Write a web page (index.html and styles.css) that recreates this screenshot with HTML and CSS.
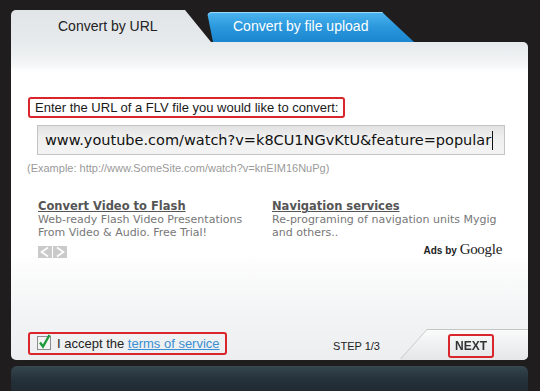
FILE: index.html
```html
<!DOCTYPE html>
<html lang="en">
<head>
    <meta charset="UTF-8">
    <meta name="viewport" content="width=device-width, initial-scale=1.0">
    <title>FLV Converter</title>
    <link rel="stylesheet" href="styles.css">
</head>
<body>
    <div class="app">
        <div class="tabs">
            <div class="tab tab-active">Convert by URL</div>
            <div class="tab tab-upload">Convert by file upload</div>
        </div>
        <div class="panel">
            <div class="prompt">Enter the URL of a FLV file you would like to convert:</div>
            <div class="field">
                <span class="field-text">www.youtube.com/watch?v=k8CU1NGvKtU&amp;feature=popular</span><span class="caret"></span>
            </div>
            <div class="example">(Example: http://www.SomeSite.com/watch?v=knEIM16NuPg)</div>

            <div class="ads">
                <div class="ad">
                    <a class="ad-title" href="#">Convert Video to Flash</a>
                    <p>Web-ready Flash Video Presentations<br>From Video &amp; Audio. Free Trial!</p>
                </div>
                <div class="ad">
                    <a class="ad-title" href="#">Navigation services</a>
                    <p>Re-programing of navigation units Mygig<br>and others..</p>
                </div>
            </div>
            <div class="ads-foot">
                <div class="arrows">
                    <span class="arrow"><svg width="14" height="12" viewBox="0 0 14 12"><path d="M10 1.5 L3.5 6 L10 10.5" fill="none" stroke="#fff" stroke-width="1.6"/></svg></span>
                    <span class="arrow"><svg width="14" height="12" viewBox="0 0 14 12"><path d="M4 1.5 L10.5 6 L4 10.5" fill="none" stroke="#fff" stroke-width="1.6"/></svg></span>
                </div>
                <div class="ads-by">Ads by <span class="google">Google</span></div>
            </div>

            <div class="footer">
                <label class="accept">
                    <svg class="check" width="15" height="16" viewBox="0 0 15 16">
                        <rect x="0.5" y="2.5" width="13" height="13" fill="#f4f4f4" stroke="#8c8c8c"/>
                        <path d="M3 8.5 L6 12.5 L12.5 1" fill="none" stroke="#1f9a3c" stroke-width="2.4"/>
                    </svg>
                    <span>I accept the <a href="#" class="terms">terms of service</a></span>
                </label>
                <div class="step">STEP 1/3</div>
                <div class="next-wrap">
                    <div class="next-tab">
                        <button class="next">NEXT</button>
                    </div>
                </div>
            </div>
        </div>
        <div class="bar"></div>
    </div>
</body>
</html>
```

FILE: styles.css
```css
body {
    margin: 0;
    background-color: #1f1d1e;
    font-family: "Liberation Sans", Arial, sans-serif;
    overflow: hidden;
}

.app {
    padding: 10px 12px 0 11px;
}

.tabs {
    display: flex;
    height: 32px;
}

.tab {
    height: 32px;
    line-height: 33px;
    font-size: 14px;
    box-sizing: border-box;
}

.tab-active {
    width: 200px;
    padding-left: 47px;
    color: #222;
    background: linear-gradient(#e1e5e8, #e7eaec);
    border-radius: 5px 0 0 0;
    clip-path: polygon(0 0, 174px 0, 200px 100%, 0 100%);
}

.tab-upload {
    width: 207px;
    height: 30px;
    line-height: 29px;
    margin: 2px 0 0 -4px;
    padding-left: 26px;
    color: #fff;
    background: linear-gradient(#4db5ef, #2b98dd 50%, #1a86cf);
    border-radius: 5px 0 0 0;
    box-shadow: inset 0 1px 0 #9ad8fa;
    clip-path: polygon(0 0, 175px 0, 207px 100%, 6px 100%);
}

.panel {
    height: 318px;
    box-sizing: border-box;
    display: flex;
    flex-direction: column;
    padding: 0 17px;
    background: linear-gradient(#e7eaec 0, #f3f5f6 22px, #fff 30px, #fff 210px, #f3f4f5 270px, #eceeef 318px);
    border-radius: 0 5px 5px 5px;
    overflow: hidden;
}

.prompt {
    align-self: flex-start;
    margin-top: 55px;
    padding: 0 5px;
    border: 2px solid #d9252c;
    border-radius: 3px;
    font-size: 13px;
    line-height: 17px;
    color: #1a1a1a;
}

.field {
    margin: 7px 0 0 9px;
    width: 468px;
    height: 30px;
    box-sizing: border-box;
    border: 1px solid #c4c4c4;
    background: linear-gradient(#e2e2e2, #efefef 40%, #f3f3f3);
    display: flex;
    align-items: center;
    padding: 0 6px 0 7px;
    overflow: hidden;
    white-space: nowrap;
}

.field-text {
    font-family: "DejaVu Sans", Verdana, sans-serif;
    font-size: 14.5px;
    color: #111;
}

.caret {
    width: 1px;
    height: 19px;
    margin-left: 1px;
    background: #111;
    flex-shrink: 0;
}

.example {
    margin: 7px 0 0 -1px;
    font-size: 11px;
    line-height: 12px;
    color: #9a9a9a;
}

.ads {
    display: grid;
    grid-template-columns: 234px 1fr;
    margin: 26px 0 0 10px;
    font-family: "DejaVu Sans", Verdana, sans-serif;
    font-size: 11px;
    line-height: 13px;
}

.ad-title {
    font-weight: bold;
    font-size: 11.5px;
    color: #555;
    text-decoration: underline;
}

.ad p {
    margin: 0;
    color: #777;
}

.ads-foot {
    display: flex;
    justify-content: space-between;
    align-items: center;
    margin: 6px 9px 0 10px;
}

.arrows {
    display: flex;
    gap: 1px;
}

.arrow {
    display: block;
    width: 14px;
    height: 12px;
    background: #cacaca;
}

.arrow svg {
    display: block;
}

.ads-by {
    font-size: 10px;
    font-weight: bold;
    color: #222;
    margin-top: -4px;
}

.google {
    font-family: "Liberation Serif", "Times New Roman", serif;
    font-size: 15px;
    font-weight: normal;
    letter-spacing: -0.3px;
}

.footer {
    margin: auto -17px 0 0;
    height: 30px;
    display: flex;
    align-items: flex-start;
}

.accept {
    display: flex;
    align-items: center;
    gap: 5px;
    height: 23px;
    margin-top: 2px;
    padding: 0 5px 0 7px;
    border: 2px solid #d9252c;
    border-radius: 3px;
    box-sizing: border-box;
    font-size: 13px;
    color: #222;
}

.check {
    display: block;
    margin-top: -3px;
}

.terms {
    color: #3a8fd2;
    text-decoration: underline;
}

.step {
    margin: 10px 20px 0 auto;
    font-size: 11px;
    color: #222;
}

.next-wrap {
    filter: drop-shadow(0 -1px 0 #c3c5c7);
}

.next-tab {
    width: 128px;
    height: 30px;
    box-sizing: border-box;
    padding: 4px 0 0 48px;
    background: linear-gradient(#fbfbfb, #eceeef 60%, #e4e6e8);
    clip-path: polygon(27px 0, 100% 0, 100% 100%, 0 100%);
}

.next {
    height: 24px;
    width: 46px;
    padding: 0;
    border: 2px solid #d9252c;
    border-radius: 3px;
    background: none;
    font-family: "Liberation Sans", Arial, sans-serif;
    font-size: 12px;
    font-weight: bold;
    color: #333;
}

.bar {
    margin-top: 6px;
    height: 30px;
    border-radius: 6px 6px 0 0;
    background: linear-gradient(#36474f, #26333c 40%, #1d262d);
}
```
